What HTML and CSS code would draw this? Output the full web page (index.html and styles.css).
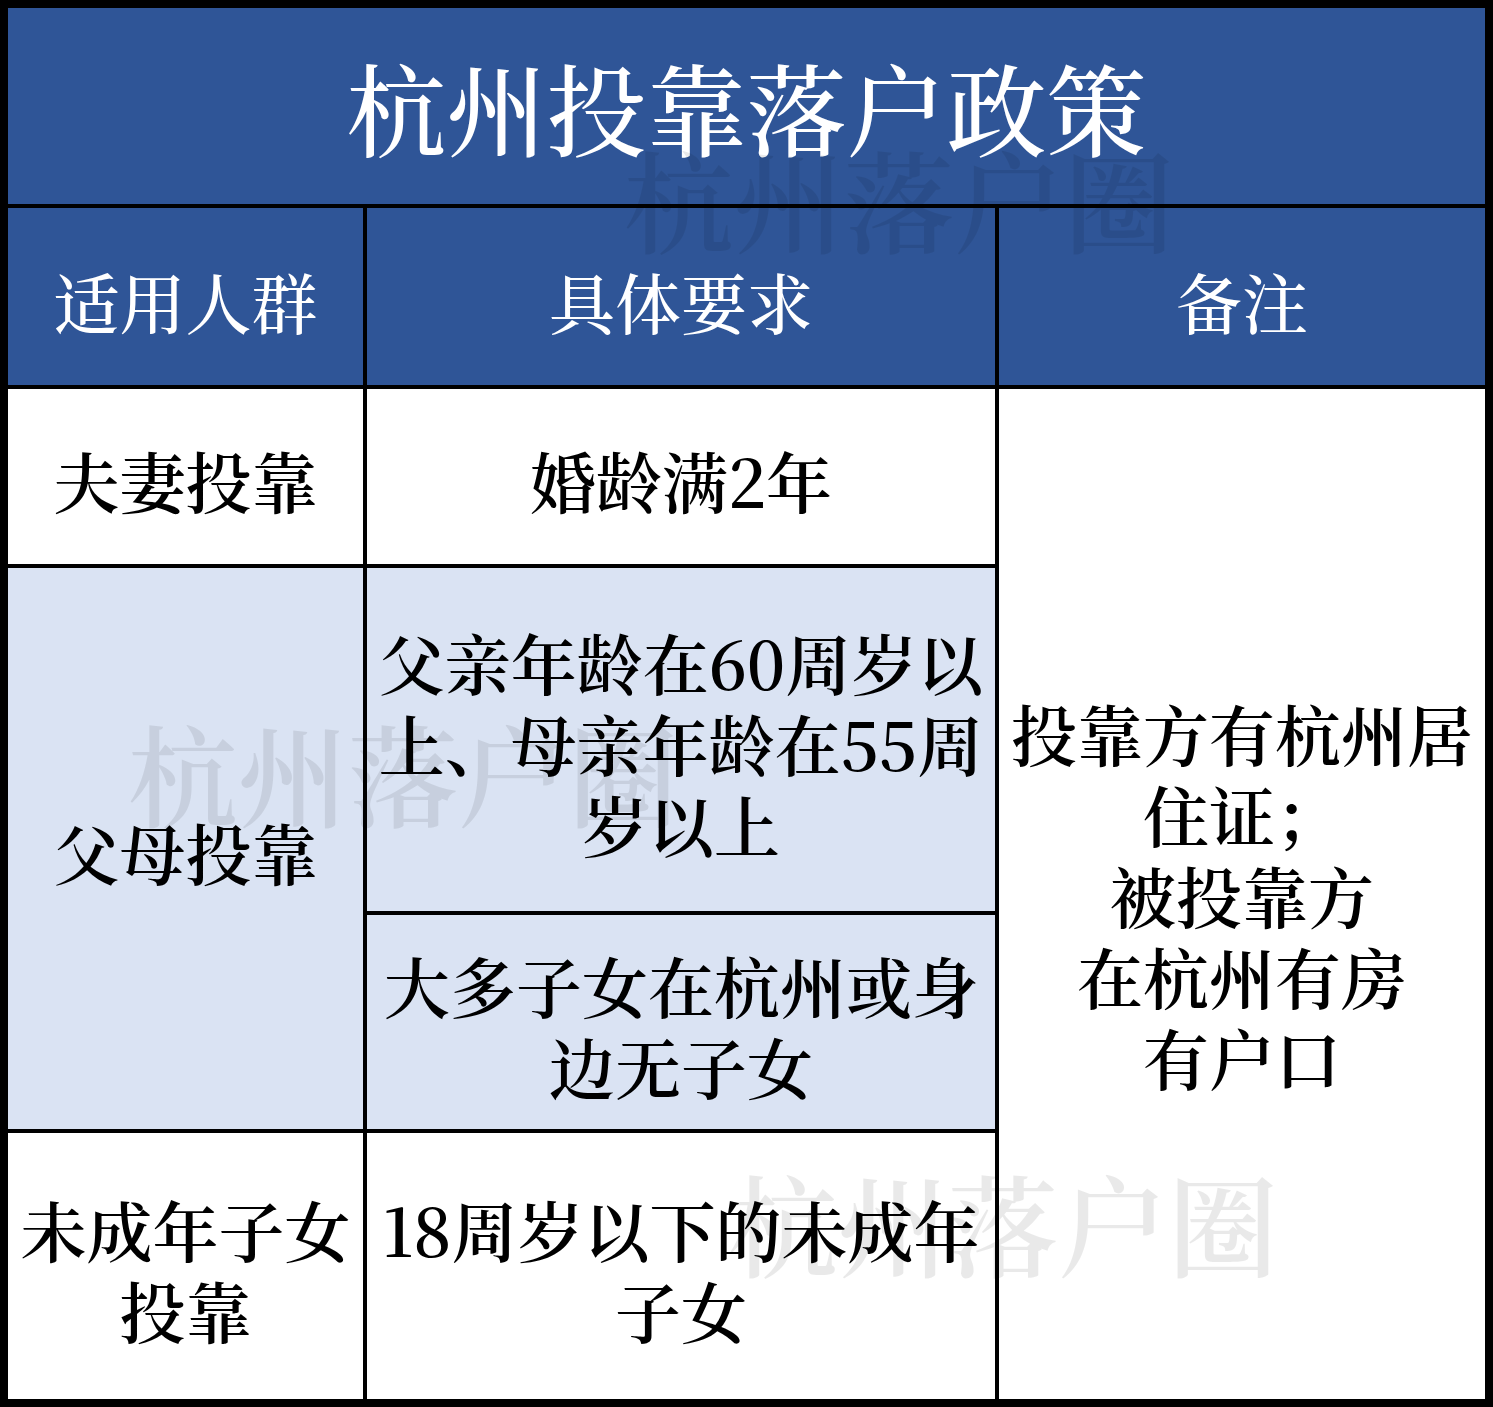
FILE: index.html
```html
<!DOCTYPE html>
<html lang="zh-CN">
<head>
<meta charset="utf-8">
<title>杭州投靠落户政策</title>
<link rel="stylesheet" href="styles.css">
</head>
<body>
<div class="table">
  <div class="cell title">杭州投靠落户政策</div>
  <div class="cell head">适用人群</div>
  <div class="cell head">具体要求</div>
  <div class="cell head">备注</div>

  <div class="cell white">夫妻投靠</div>
  <div class="cell white">婚龄满2年</div>
  <div class="cell white note">投靠方有杭州居<br>住证；<br>被投靠方<br>在杭州有房<br>有户口</div>

  <div class="cell light parents">父母投靠</div>
  <div class="cell light">父亲年龄在60周岁以<br>上、母亲年龄在55周<br>岁以上</div>
  <div class="cell light">大多子女在杭州或身<br>边无子女</div>

  <div class="cell white">未成年子女<br>投靠</div>
  <div class="cell white">18周岁以下的未成年<br>子女</div>

  <div class="mark mark-top">杭州落户圈</div>
  <div class="mark mark-mid">杭州落户圈</div>
  <div class="mark mark-bot">杭州落户圈</div>
</div>
</body>
</html>
```

FILE: styles.css
```css
html, body {
  margin: 0;
  padding: 0;
  background: #000;
}

.table {
  position: relative;
  box-sizing: border-box;
  width: 1493px;
  height: 1407px;
  padding: 8px;
  background: #000;
  display: grid;
  grid-template-columns: 355px 628px 486px;
  grid-template-rows: 196px 177px 175px 343px 214px 266px;
  gap: 4px;
  font-family: "Noto Serif CJK SC", "Liberation Serif", "Noto Sans CJK SC", serif;
  overflow: hidden;
}

.cell {
  display: flex;
  align-items: center;
  justify-content: center;
  text-align: center;
  white-space: nowrap;
  font-size: 66px;
  line-height: 81px;
  font-weight: 600;
  color: #000;
  padding-top: 6px;
  box-sizing: border-box;
}

.title {
  grid-column: 1 / 4;
  background: #2f5597;
  color: #fff;
  font-size: 100px;
  line-height: 1;
  font-weight: 500;
  padding-top: 0;
}

.head {
  background: #2f5597;
  color: #fff;
  font-weight: 500;
  padding-top: 8px;
}

.white {
  background: #fff;
}

.light {
  background: #dae3f3;
}

.note {
  grid-column: 3;
  grid-row: 3 / 7;
  padding-top: 0;
}

.parents {
  grid-row: 4 / 6;
}

.mark {
  position: absolute;
  font-family: "Noto Serif CJK SC", "Noto Sans CJK SC", serif;
  font-size: 110px;
  line-height: 1;
  font-weight: 600;
  color: rgba(0, 0, 0, 0.085);
  white-space: nowrap;
  pointer-events: none;
}

.mark-top {
  left: 624px;
  top: 142px;
}

.mark-mid {
  left: 128px;
  top: 716px;
}

.mark-bot {
  left: 728px;
  top: 1166px;
}
```
